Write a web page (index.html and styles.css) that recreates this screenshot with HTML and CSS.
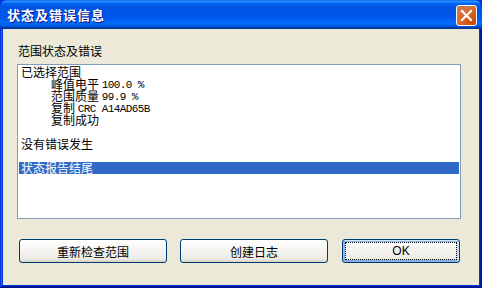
FILE: index.html
```html
<!DOCTYPE html>
<html lang="zh-CN">
<head>
    <meta charset="UTF-8">
    <title>状态及错误信息</title>
    <link rel="stylesheet" href="styles.css">
</head>
<body>
    <div class="ventana">
        <div class="barra-titulo">
            <span class="titulo">状态及错误信息</span>
            <button class="cerrar" aria-label="关闭">
                <svg width="13" height="13" viewBox="0 0 13 13">
                    <path d="M2 2 L11 11 M11 2 L2 11" stroke="#fff" stroke-width="2.2" stroke-linecap="square"/>
                </svg>
            </button>
        </div>
        <div class="contenido">
            <div class="etiqueta">范围状态及错误</div>
            <div class="lista">
                <div class="linea">已选择范围</div>
                <div class="linea sangria">峰值电平 <span class="mono">100.0 %</span></div>
                <div class="linea sangria">范围质量 <span class="mono">99.9 %</span></div>
                <div class="linea sangria">复制 <span class="mono">CRC A14AD65B</span></div>
                <div class="linea sangria">复制成功</div>
                <div class="linea"></div>
                <div class="linea">没有错误发生</div>
                <div class="linea"></div>
                <div class="linea seleccionada">状态报告结尾</div>
            </div>
            <div class="botones">
                <button class="boton">重新检查范围</button>
                <button class="boton">创建日志</button>
                <button class="boton boton-ok">OK</button>
            </div>
        </div>
    </div>
</body>
</html>
```

FILE: styles.css
```css
html, body {
    margin: 0;
    padding: 0;
    background: #0831d9;
}

body {
    font-family: "Noto Sans CJK SC", sans-serif;
    font-size: 12px;
}

.ventana {
    width: 482px;
    height: 288px;
    display: flex;
    flex-direction: column;
    background: #0831d9;
    border-radius: 7px 7px 0 0;
    box-sizing: border-box;
    box-shadow: inset -1px -1px #00138c, inset 1px 1px #0831d9, inset -2px -2px #001ea0, inset 2px 2px #166aee;
    overflow: hidden;
}

.barra-titulo {
    height: 29px;
    flex: none;
    display: flex;
    align-items: center;
    justify-content: space-between;
    padding: 0 5px 0 7px;
    background: linear-gradient(to bottom, #0058ee 0%, #3593ff 4%, #288eff 6%, #127dff 8%, #036ffc 10%, #0262ee 14%, #0057e5 20%, #0054e3 24%, #0055eb 56%, #005bf5 66%, #026afe 76%, #0062ef 86%, #0052d6 92%, #0040ab 94%, #003092 100%);
    border-radius: 7px 7px 0 0;
}

.titulo {
    color: #fff;
    font-weight: bold;
    font-size: 13px;
    letter-spacing: 1px;
    text-shadow: 1px 1px #0f1089;
    line-height: 14px;
}

.cerrar {
    width: 21px;
    height: 21px;
    padding: 0;
    margin-top: 1px;
    border: 1px solid #fff;
    border-radius: 3px;
    background: radial-gradient(circle at 90% 90%, #cc4600 0%, #dc6527 55%, #cd7546 70%), #e15a32;
    display: flex;
    align-items: center;
    justify-content: center;
}

.contenido {
    flex: 1;
    margin: 0 3px 3px;
    background: #ece9d8;
    padding: 15px 18px 0 14px;
}

.etiqueta {
    line-height: 14px;
    margin-left: 1px;
    margin-bottom: 6px;
    color: #000;
}

.lista {
    height: 155px;
    box-sizing: border-box;
    border: 1px solid #7f9db9;
    background: #fff;
    padding: 1px;
}

.linea {
    height: 12px;
    line-height: 12px;
    padding-left: 2px;
    white-space: pre;
    color: #000;
}

.sangria {
    padding-left: 32px;
}

.mono {
    font-family: "Liberation Mono", monospace;
    font-size: 11px;
    letter-spacing: -0.6px;
    vertical-align: 1px;
}

.seleccionada {
    background: #316ac5;
    color: #fff;
}

.botones {
    display: flex;
    gap: 13px;
    margin-top: 20px;
    padding-left: 2px;
}

.boton {
    width: 148px;
    height: 24px;
    padding: 0;
    font-family: "Noto Sans CJK SC", sans-serif;
    font-size: 12px;
    color: #000;
    border: 1px solid #003c74;
    border-radius: 3px;
    background: linear-gradient(180deg, #fff, #ecebe6 86%, #d6d0c5);
}

.boton-ok {
    width: 118px;
    margin-left: 1px;
    font-family: "Liberation Sans", sans-serif;
    box-shadow: inset -1px 1px #cee7ff, inset 1px 2px #98b8ea, inset -2px 2px #bcd4f6, inset 1px -1px #89ade4, inset 2px -2px #89ade4;
    outline: 1px dotted #000;
    outline-offset: -4px;
}
```
